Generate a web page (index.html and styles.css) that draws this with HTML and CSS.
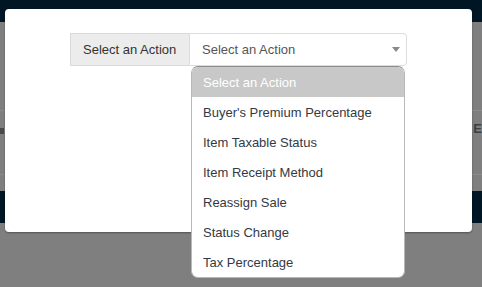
FILE: index.html
```html
<!DOCTYPE html>
<html lang="en">
<head>
  <meta charset="UTF-8">
  <meta name="viewport" content="width=device-width, initial-scale=1.0">
  <title>Select an Action</title>
  <link rel="stylesheet" href="styles.css">
</head>
<body>

  <!-- Page behind the modal (dimmed) -->
  <div id="page">
    <div class="topbar"></div>
    <div class="row row-first">
      <span class="ghost ghost-left"></span>
      <span class="ghost-right">: E</span>
    </div>
    <div class="row row-second"></div>
    <div class="band"></div>
  </div>

  <!-- Modal -->
  <div id="modal">
    <div class="input-group">
      <span class="addon">Select an Action</span>
      <div class="select">
        <span class="select-value">Select an Action</span>
        <span class="caret"></span>

        <ul class="menu">
          <li class="active">Select an Action</li>
          <li>Buyer's Premium Percentage</li>
          <li>Item Taxable Status</li>
          <li>Item Receipt Method</li>
          <li>Reassign Sale</li>
          <li>Status Change</li>
          <li>Tax Percentage</li>
        </ul>
      </div>
    </div>
  </div>

</body>
</html>
```

FILE: styles.css
```css
/* ====== RESET ====== */
html, body {
  margin: 0;
  padding: 0;
}

body {
  width: 482px;
  height: 287px;
  overflow: hidden;
  background-color: #7f7f7f;
  font-family: 'Liberation Sans', Arial, sans-serif;
  font-size: 13px;
  position: relative;
}

/* ====== DIMMED PAGE ====== */
.topbar {
  height: 22px;
  background-color: #011624;
}

.row {
  border-bottom: 1px solid #8a8a8a;
  position: relative;
}

.row-first {
  height: 88px;
}

.row-second {
  height: 63px;
}

.ghost-left {
  position: absolute;
  left: 0;
  top: 106px;
  width: 4px;
  height: 6px;
  background-color: #4a4a4a;
}

.ghost-right {
  position: absolute;
  right: 0;
  top: 99px;
  color: #3e3e3e;
  font-weight: bold;
  font-size: 13px;
}

.band {
  margin-top: 16px;
  height: 32px;
  background-color: #011624;
}

/* ====== MODAL ====== */
#modal {
  position: absolute;
  left: 5px;
  top: 9px;
  width: 467px;
  height: 223px;
  background-color: #fff;
  border-radius: 4px;
  box-shadow: 0 1px 2px rgba(0, 0, 0, 0.35);
  display: flex;
  justify-content: center;
  padding-top: 24px;
  box-sizing: border-box;
}

.input-group {
  display: flex;
  width: 337px;
  height: 33px;
}

.addon {
  display: flex;
  align-items: center;
  width: 119px;
  box-sizing: border-box;
  padding: 0 12px;
  background-color: #ececec;
  border: 1px solid #d9d9d9;
  border-right: 0;
  color: #333;
}

.select {
  position: relative;
  flex: 1;
  display: flex;
  align-items: center;
  padding: 0 12px;
  border: 1px solid #dcdcdc;
  border-radius: 0 4px 4px 0;
  color: #555;
}

.select-value {
  flex: 1;
}

.caret {
  width: 0;
  height: 0;
  border-left: 4px solid transparent;
  border-right: 4px solid transparent;
  border-top: 5px solid #888;
  margin-right: -6px;
}

/* ====== DROPDOWN ====== */
.menu {
  position: absolute;
  left: 1px;
  top: 32px;
  width: 214px;
  margin: 0;
  padding: 0;
  list-style: none;
  background-color: #fff;
  border: 1px solid #b8b8b8;
  border-top-color: #8c8c8c;
  border-radius: 7px;
  overflow: hidden;
  box-sizing: border-box;
}

.menu li {
  height: 30px;
  line-height: 32px;
  padding: 0 11px;
  color: #343a44;
}

.menu li.active {
  background-color: #c8c8c8;
  color: #fff;
}
```
